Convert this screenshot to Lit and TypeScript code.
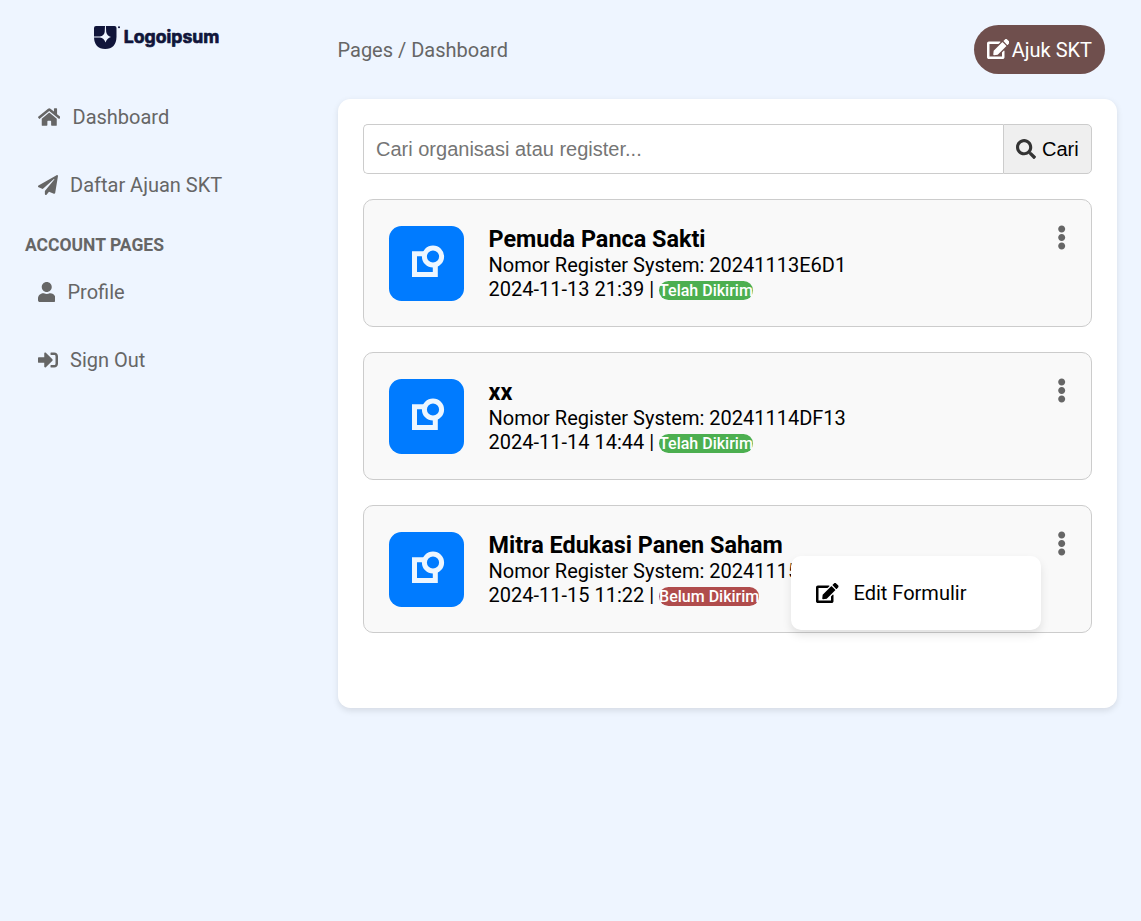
import { LitElement, html, svg, css } from "lit";
import { customElement } from "lit/decorators.js";

const icons = {
  home: [576, "M280.37 148.26L96 300.11V464a16 16 0 0 0 16 16l112.06-.29a16 16 0 0 0 15.92-16V368a16 16 0 0 1 16-16h64a16 16 0 0 1 16 16v95.64a16 16 0 0 0 16 16.05L464 480a16 16 0 0 0 16-16V300L295.67 148.26a12.19 12.19 0 0 0-15.3 0zM571.6 251.47L488 182.56V44.05a12 12 0 0 0-12-12h-56a12 12 0 0 0-12 12v72.61L318.47 43a48 48 0 0 0-61 0L4.34 251.47a12 12 0 0 0-1.6 16.9l25.5 31A12 12 0 0 0 45.15 301l235.22-193.74a12.19 12.19 0 0 1 15.3 0L530.9 301a12 12 0 0 0 16.9-1.6l25.5-31a12 12 0 0 0-1.7-16.93z"],
  plane: [512, "M476 3.2L12.5 270.6c-18.1 10.4-15.8 35.6 2.2 43.2L121 358.4l287.3-253.2c5.5-4.9 13.3 2.6 8.6 8.3L176 407v80.5c0 23.6 28.5 32.9 42.5 15.8L282 426l124.6 52.2c14.2 6 30.4-2.9 33-18.2l72-432C515 7.8 493.3-6.8 476 3.2z"],
  user: [448, "M224 256c70.7 0 128-57.3 128-128S294.7 0 224 0 96 57.3 96 128s57.3 128 128 128zm89.6 32h-16.7c-22.2 10.2-46.9 16-72.9 16s-50.6-5.8-72.9-16h-16.7C60.2 288 0 348.2 0 422.4V464c0 26.5 21.5 48 48 48h352c26.5 0 48-21.5 48-48v-41.6c0-74.2-60.2-134.4-134.4-134.4z"],
  signOut: [512, "M416 448h-84c-6.6 0-12-5.4-12-12v-40c0-6.6 5.4-12 12-12h84c17.7 0 32-14.3 32-32V160c0-17.7-14.3-32-32-32h-84c-6.6 0-12-5.4-12-12V76c0-6.6 5.4-12 12-12h84c53 0 96 43 96 96v192c0 53-43 96-96 96zm-47-209L201 71c-15-15-41-4.5-41 17v96H24c-13.3 0-24 10.7-24 24v96c0 13.3 10.7 24 24 24h136v96c0 21.5 26 32 41 17l168-168c9.3-9.4 9.3-24.6 0-34z"],
  edit: [576, "M402.6 83.2l90.2 90.2c3.8 3.8 3.8 10 0 13.8L274.4 405.6l-92.8 10.3c-12.4 1.4-22.9-9.1-21.5-21.5l10.3-92.8L388.8 83.2c3.8-3.8 10-3.8 13.8 0zm162-22.9l-48.8-48.8c-15.2-15.2-39.9-15.2-55.2 0l-35.4 35.4c-3.8 3.8-3.8 10 0 13.8l90.2 90.2c3.8 3.8 10 3.8 13.8 0l35.4-35.4c15.2-15.3 15.2-40 0-55.2zM384 346.2V448H64V128h229.8c3.2 0 6.2-1.3 8.5-3.5l40-40c7.6-7.6 2.2-20.5-8.5-20.5H48C21.5 64 0 85.5 0 112v352c0 26.5 21.5 48 48 48h352c26.5 0 48-21.5 48-48V306.2c0-10.7-12.9-16-20.5-8.5l-40 40c-2.2 2.3-3.5 5.3-3.5 8.5z"],
  search: [512, "M505 442.7L405.3 343c-4.5-4.5-10.6-7-17-7H372c27.6-35.3 44-79.7 44-128C416 93.1 322.9 0 208 0S0 93.1 0 208s93.1 208 208 208c48.3 0 92.7-16.4 128-44v16.3c0 6.4 2.5 12.5 7 17l99.7 99.7c9.4 9.4 24.6 9.4 33.9 0l28.3-28.3c9.4-9.4 9.4-24.6.1-34zM208 336c-70.7 0-128-57.2-128-128 0-70.7 57.2-128 128-128 70.7 0 128 57.2 128 128 0 70.7-57.2 128-128 128z"],
  dots: [192, "M96 184c39.8 0 72 32.2 72 72s-32.2 72-72 72-72-32.2-72-72 32.2-72 72-72zM24 80c0 39.8 32.2 72 72 72s72-32.2 72-72S135.8 8 96 8 24 40.2 24 80zm0 352c0 39.8 32.2 72 72 72s72-32.2 72-72-32.2-72-72-72-72 32.2-72 72z"],
} as const;

const icon = (name: keyof typeof icons) =>
  html`<svg class="icon" viewBox="0 0 ${icons[name][0]} 512">${svg`<path d=${icons[name][1]} />`}</svg>`;

interface Submission {
  name: string;
  register: string;
  date: string;
  sent: boolean;
  menu?: boolean;
}

const submissions: Submission[] = [
  { name: "Pemuda Panca Sakti", register: "20241113E6D1", date: "2024-11-13 21:39", sent: true },
  { name: "xx", register: "20241114DF13", date: "2024-11-14 14:44", sent: true },
  { name: "Mitra Edukasi Panen Saham", register: "20241115", date: "2024-11-15 11:22", sent: false, menu: true },
];

@customElement("app-root")
export class AppRoot extends LitElement {
  static styles = css`
    :host {
      display: flex;
      min-height: 100vh;
      box-sizing: border-box;
      background: #eef5ff;
      font-family: Roboto, sans-serif;
      font-size: 20px;
      line-height: 24px;
      color: #000;
    }
    * { box-sizing: border-box; }
    .icon { display: block; height: 1em; width: auto; fill: currentColor; flex: none; }
    .sidebar { width: 312.5px; flex: none; padding: 24px 25px 0; color: #666; }
    .logo { display: block; width: 128px; height: 26px; margin: 0 auto 0 68px; }
    .logo-text { font: 700 17.5px Inter, sans-serif; stroke: #10153a; stroke-width: 0.7; stroke-linejoin: round; }
    .nav { display: flex; flex-direction: column; padding-left: 12.5px; gap: 44px; }
    .nav.primary { margin-top: 55px; }
    .nav.account { margin-top: 23px; }
    .link { display: flex; align-items: center; gap: 12.5px; }
    .link .icon { margin-bottom: 1px; }
    .heading { margin: 37px 0 0; font-size: 17.5px; line-height: 23px; font-weight: 700; }
    .main { flex: 1; min-width: 0; padding: 25px 24px 0 25px; }
    .topbar { display: flex; justify-content: space-between; align-items: center; padding-right: 12px; color: #666; }
    .submit {
      display: flex; align-items: center; gap: 2.5px; height: 49px; padding: 0 13px 0 12.5px;
      border: 0; border-radius: 25px; background: #6f4f4d; color: #fff; font: inherit;
    }
    .submit .icon { margin-bottom: 1px; }
    .panel {
      margin-top: 25px; height: 609px; padding: 25px; border-radius: 12.5px; background: #fff;
      box-shadow: 0 2.5px 6px rgba(0, 0, 0, 0.1);
    }
    .search { display: flex; height: 50px; margin-bottom: 25px; font-family: "Liberation Sans", Arial, sans-serif; }
    .field {
      flex: 1; min-width: 0; padding: 0 12.5px; border: 1px solid #ccc; border-right: 0;
      border-radius: 5px 0 0 5px; font: inherit; background: #fff;
    }
    .field::placeholder { color: #757575; }
    .find {
      display: flex; align-items: center; gap: 6px; width: 89px; padding: 0 12px; border: 1px solid #ccc;
      border-radius: 0 5px 5px 0; background: #efefef; font: inherit; color: #000;
    }
    .find .icon { color: #333; margin-bottom: 1px; }
    .list { display: flex; flex-direction: column; gap: 25px; }
    .card {
      position: relative; display: flex; align-items: flex-start; height: 128px; padding: 26px 25px 0;
      border: 1px solid #ccc; border-radius: 10px; background: #f9f9f9;
    }
    .tile { flex: none; width: 75px; height: 75px; border-radius: 12.5px; background: #007bff; }
    .info { flex: 1; min-width: 0; margin-left: 25px; white-space: nowrap; }
    .name { margin: 0; font-size: 23.4px; line-height: 27px; font-weight: 700; }
    .line { margin: 0; }
    .badge { border-radius: 12.5px; color: #fff; font-size: 16px; font-weight: 500; background: #4caf50; }
    .badge.unsent { background: #b04c4c; }
    .more { margin-top: -1px; font-size: 25px; color: #666; }
    .menu {
      position: absolute; top: 50px; right: 50px; z-index: 1; display: flex; align-items: center; gap: 15px;
      width: 250px; height: 74px; padding: 0 25px; border-radius: 10px; background: #fff;
      box-shadow: 0 5px 10px rgba(0, 0, 0, 0.1);
    }
    .menu .icon { margin-bottom: 1px; }
  `;

  private renderCard(item: Submission) {
    return html`
      <article class="card">
        <svg class="tile" viewBox="0 0 75 75" fill="none" stroke="#edf6ff" stroke-width="5">
          <path d="M37 27.7H25.5V48.5H46.3V37" />
          <circle cx="44" cy="30.5" r="8.6" fill="#007bff" />
        </svg>
        <div class="info">
          <h2 class="name">${item.name}</h2>
          <p class="line">Nomor Register System: ${item.register}</p>
          <p class="line">${item.date} | <span class="badge ${item.sent ? "" : "unsent"}">${item.sent ? "Telah Dikirim" : "Belum Dikirim"}</span></p>
        </div>
        <div class="more">${icon("dots")}</div>
        ${item.menu ? html`<div class="menu">${icon("edit")}<span>Edit Formulir</span></div>` : ""}
      </article>
    `;
  }

  render() {
    return html`
      <aside class="sidebar">
        <svg class="logo" viewBox="0 0 128 26" fill="#10153a">
          <path d="M3 2H21.5Q23.5 2 23.5 4V13Q23 25 12.2 25Q1.4 25 1 13V4Q1 2 3 2Z" />
          <path fill="#eef5ff" d="M12 2H12.9L13.2 8Q14 12 18 13Q14 14 12.5 18.5Q11 14.2 7 13.6L1 13.4V12.6L7 12.4Q11 12 11.7 8Z" />
          <circle cx="26" cy="3.3" r="1" />
          <text class="logo-text" x="30.8" y="18.8" textLength="95.5" lengthAdjust="spacingAndGlyphs">Logoipsum</text>
        </svg>
        <nav class="nav primary">
          <div class="link">${icon("home")}<span>Dashboard</span></div>
          <div class="link">${icon("plane")}<span>Daftar Ajuan SKT</span></div>
        </nav>
        <h3 class="heading">ACCOUNT PAGES</h3>
        <nav class="nav account">
          <div class="link">${icon("user")}<span>Profile</span></div>
          <div class="link">${icon("signOut")}<span>Sign Out</span></div>
        </nav>
      </aside>
      <main class="main">
        <header class="topbar">
          <span>Pages / Dashboard</span>
          <button class="submit">${icon("edit")}<span>Ajuk SKT</span></button>
        </header>
        <section class="panel">
          <div class="search">
            <input class="field" placeholder="Cari organisasi atau register..." />
            <button class="find">${icon("search")}<span>Cari</span></button>
          </div>
          <div class="list">${submissions.map((item) => this.renderCard(item))}</div>
        </section>
      </main>
    `;
  }
}
